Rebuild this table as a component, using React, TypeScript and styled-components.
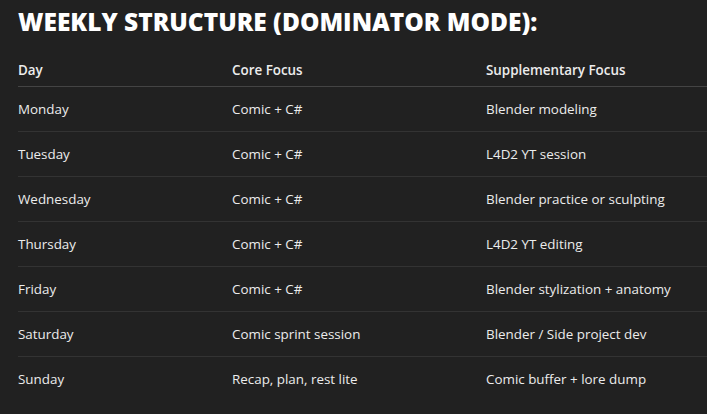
import styled, { createGlobalStyle } from "styled-components";

const GlobalStyle = createGlobalStyle`
  body {
    margin: 0;
    background-color: #212121;
    overflow: hidden;
  }
`;

const Page = styled.div`
  width: 707px;
  height: 414px;
  padding-left: 18px;
  box-sizing: border-box;
  overflow: hidden;
  color: #ececec;
  font-family: "Open Sans", "Noto Sans", sans-serif;
`;

const Title = styled.h2`
  margin: 6px 0 0 0;
  font-size: 24.5px;
  line-height: 32px;
  font-weight: 800;
  color: #ffffff;
  white-space: nowrap;
`;

const Table = styled.div`
  width: 720px;
  display: grid;
  grid-template-columns: 214px 254px 1fr;
`;

const Row = styled.div<{ $header?: boolean; $last?: boolean }>`
  display: contents;
  & > div {
    height: ${(p) => (p.$header ? "42px" : "44px")};
    padding-bottom: ${(p) => (p.$header ? "6px" : "0")};
    align-items: ${(p) => (p.$header ? "flex-end" : "center")};
    font-weight: ${(p) => (p.$header ? 600 : 400)};
    border-bottom: ${(p) =>
      p.$last ? "1px solid transparent" : p.$header ? "1px solid #444" : "1px solid #333"};
  }
`;

const Cell = styled.div`
  display: flex;
  box-sizing: content-box;
  font-size: 13.4px;
  line-height: 20px;
  white-space: nowrap;
`;

const rows = [
  ["Monday", "Comic + C#", "Blender modeling"],
  ["Tuesday", "Comic + C#", "L4D2 YT session"],
  ["Wednesday", "Comic + C#", "Blender practice or sculpting"],
  ["Thursday", "Comic + C#", "L4D2 YT editing"],
  ["Friday", "Comic + C#", "Blender stylization + anatomy"],
  ["Saturday", "Comic sprint session", "Blender / Side project dev"],
  ["Sunday", "Recap, plan, rest lite", "Comic buffer + lore dump"],
];

export default function App() {
  return (
    <Page>
      <GlobalStyle />
      <Title>WEEKLY STRUCTURE (DOMINATOR MODE):</Title>
      <Table>
        <Row $header>
          <Cell>Day</Cell>
          <Cell>Core Focus</Cell>
          <Cell>Supplementary Focus</Cell>
        </Row>
        {rows.map((r, i) => (
          <Row key={r[0]} $last={i === rows.length - 1}>
            <Cell>{r[0]}</Cell>
            <Cell>{r[1]}</Cell>
            <Cell>{r[2]}</Cell>
          </Row>
        ))}
      </Table>
    </Page>
  );
}
